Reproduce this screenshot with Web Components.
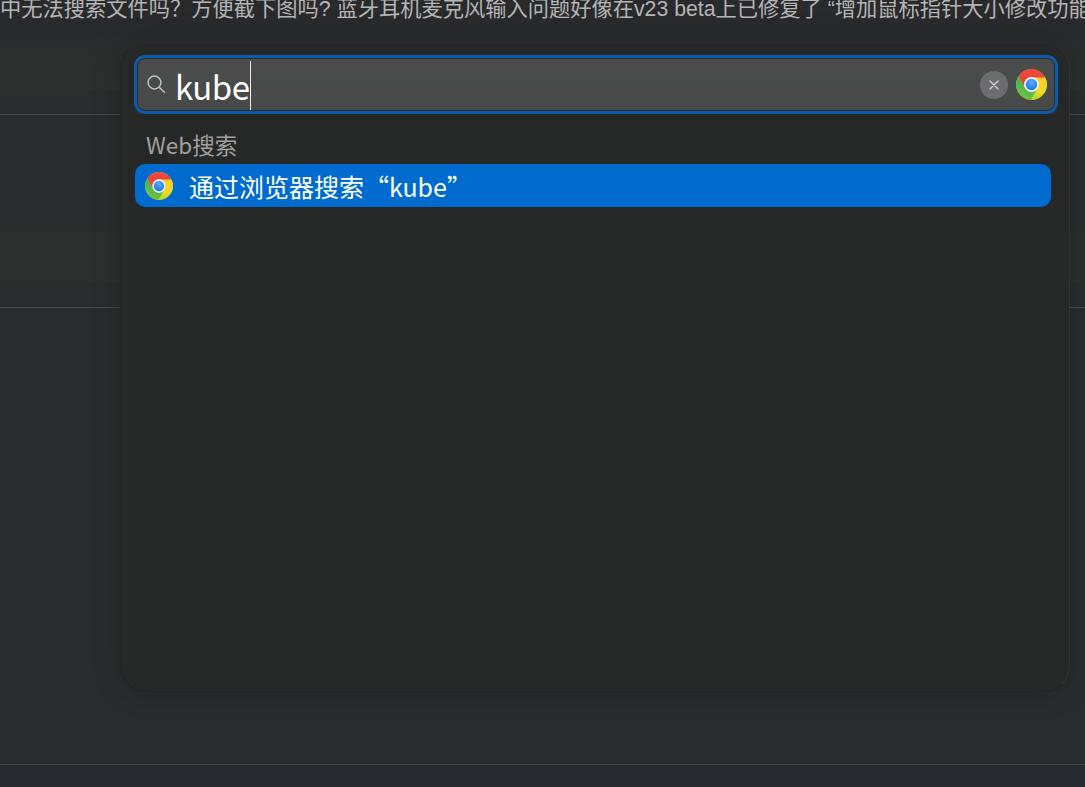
<!DOCTYPE html>
<html lang="zh-CN"><head><meta charset="utf-8"><title>kube</title>
<style>
html,body{margin:0;padding:0;height:100%;overflow:hidden;background:#292b2d}
</style></head><body>
<app-page></app-page>
<script>
class ChromeIcon extends HTMLElement{
  constructor(){super();const s=this.attachShadow({mode:'open'});
  const id=ChromeIcon.n=(ChromeIcon.n||0)+1;
  s.innerHTML=`<style>:host{display:block;width:var(--size,31px);height:var(--size,31px);flex:none}svg{display:block;width:100%;height:100%}</style>
  <svg viewBox="0 0 48 48" aria-hidden="true"><defs>
  <linearGradient id="r${id}" x1="0" y1="0" x2="0" y2="1"><stop offset="0" stop-color="#f0483c"/><stop offset="1" stop-color="#e23e33"/></linearGradient>
  <linearGradient id="y${id}" x1="0.5" y1="0" x2="0.35" y2="1"><stop offset="0" stop-color="#fbcb27"/><stop offset=".6" stop-color="#eedb22"/><stop offset="1" stop-color="#b5d432"/></linearGradient>
  <linearGradient id="g${id}" x1="0" y1="0" x2="1" y2="1"><stop offset="0" stop-color="#7cc540"/><stop offset="1" stop-color="#25ab5c"/></linearGradient>
  <radialGradient id="b${id}" cx=".5" cy=".3" r=".8"><stop offset="0" stop-color="#5aaefb"/><stop offset="1" stop-color="#0f74e4"/></radialGradient></defs>
  <circle cx="24" cy="24" r="23.8" fill="#cfd040"/>
  <path fill="url(#g${id})" transform="rotate(240 24 24)" d="M24 13L45.3 13A24 24 0 0 0 3.82 11.05L14.47 29.5A11 11 0 0 1 24 13Z"/>
  <path fill="url(#y${id})" d="M34.9 25.5A11 11 0 0 1 33.53 29.5L24 48A24 24 0 0 0 45.3 13L24 13A11 11 0 0 1 34.9 25.5Z"/>
  <path fill="url(#r${id})" d="M24 13L45.3 13A24 24 0 0 0 3.82 11.05L14.47 29.5A11 11 0 0 1 24 13Z"/>
  <circle cx="24" cy="24" r="11.6" fill="#eef0f2"/>
  <circle cx="24" cy="24" r="8.8" fill="url(#b${id})"/></svg>`;}
}
customElements.define('chrome-icon',ChromeIcon);

class BackdropBand extends HTMLElement{
  constructor(){super();this.attachShadow({mode:'open'}).innerHTML=`<style>:host{display:block;height:var(--h);background:var(--bg,transparent);border-bottom:var(--line,0 solid transparent);box-sizing:border-box}</style><slot></slot>`;}
}
customElements.define('backdrop-band',BackdropBand);

class SearchField extends HTMLElement{
  constructor(){super();this.attachShadow({mode:'open'}).innerHTML=`<style>
  :host{display:flex;align-items:center;box-sizing:border-box;height:59px;margin:0;border:3px solid #0e5aa9;border-radius:11px;background:linear-gradient(#4b4c4c,#474848);box-shadow:inset 0 0 0 1px #2b2c2c;padding:0 8px 0 9px;font-family:"Noto Sans CJK SC","Noto Sans",sans-serif}
  .mag{width:20px;height:22px;flex:none;margin-right:9px}
  .q{font-size:33px;line-height:51px;color:#fff;height:49px;display:block;letter-spacing:-.45px;border-right:1px solid #f0f0f0;white-space:pre;margin-top:1px}
  .sp{flex:1}
  .x{width:28px;height:28px;border-radius:50%;background:#6d6d6f;display:flex;align-items:center;justify-content:center;margin-right:8px;flex:none}
  .x svg{width:10px;height:10px;display:block}
  </style>
  <svg class="mag" viewBox="0 0 20 22" fill="none" stroke="#bcc0c6" stroke-width="1.5" stroke-linecap="round"><circle cx="8.5" cy="8.5" r="6.4"/><path d="M13.2 13.2L18.4 18.2"/></svg>
  <span class="q"><slot></slot></span><span class="sp"></span>
  <span class="x"><svg viewBox="0 0 10 10" stroke="#cfcfd2" stroke-width="1.4" stroke-linecap="round"><path d="M1 1L9 9M9 1L1 9"/></svg></span>
  <chrome-icon></chrome-icon>`;}
}
customElements.define('search-field',SearchField);

class ResultRow extends HTMLElement{
  constructor(){super();this.attachShadow({mode:'open'}).innerHTML=`<style>
  :host{display:flex;align-items:center;height:43px;box-sizing:border-box;margin:0 7px 0 1px;padding-left:10px;border-radius:10px;background:#006bce;color:#fff;font:25px/43px "Noto Sans CJK SC","Noto Sans",sans-serif;--size:28px;white-space:nowrap}
  .t{margin-left:16px;position:relative;top:1px}
  </style><chrome-icon></chrome-icon><span class="t"><slot></slot></span>`;}
}
customElements.define('result-row',ResultRow);

class LauncherPanel extends HTMLElement{
  constructor(){super();this.attachShadow({mode:'open'}).innerHTML=`<style>
  :host{position:absolute;left:120px;top:42px;width:950px;height:650px;box-sizing:border-box;display:block;padding:12px 11px 0 13px;background:#262827;border:1px solid #313232;border-top-color:#2c2d2e;border-left-color:#232524;border-bottom-color:#222423;border-radius:26px;box-shadow:0 0 30px rgba(0,0,0,.2)}
  </style><slot></slot>`;}
}
customElements.define('launcher-panel',LauncherPanel);

class SectionLabel extends HTMLElement{
  constructor(){super();this.attachShadow({mode:'open'}).innerHTML=`<style>:host{display:block;font:22.5px/30px "Noto Sans CJK SC","Noto Sans",sans-serif;color:#a0a0a0;margin:15px 0 5px 12px;height:30px}</style><slot></slot>`;}
}
customElements.define('section-label',SectionLabel);

class AppPage extends HTMLElement{
  constructor(){super();this.attachShadow({mode:'open'}).innerHTML=`<style>
  :host{display:flex;flex-direction:column;position:relative;width:1085px;height:787px;overflow:hidden;background:#292b2d}
  .top{height:38px;box-sizing:border-box;background:#292a2c;color:#b5b5b5;font:21.25px/19px "Liberation Sans","Noto Sans CJK SC",sans-serif;white-space:nowrap;overflow:hidden}
  .fill{flex:1}
  </style>
  <div class="top">中无法搜索文件吗？方便截下图吗? 蓝牙耳机麦克风输入问题好像在v23 beta上已修复了 “增加鼠标指针大小修改功能</div>
  <backdrop-band style="--h:52px;--bg:linear-gradient(#2a2c2d,#2e302f)"></backdrop-band>
  <backdrop-band style="--h:25px;--bg:#2a2c2e;--line:1px solid #444648"></backdrop-band>
  <backdrop-band style="--h:117px;--bg:#292b2d"></backdrop-band>
  <backdrop-band style="--h:50px;--bg:#2d2f2e"></backdrop-band>
  <backdrop-band style="--h:26px;--bg:#2a2c2e;--line:1px solid #444648"></backdrop-band>
  <backdrop-band style="--h:457px;--bg:#292b2d;--line:1px solid #444648"></backdrop-band>
  <div class="fill" style="background:#292a30"></div>
  <launcher-panel>
    <search-field>kube</search-field>
    <section-label>Web搜索</section-label>
    <result-row>通过浏览器搜索“kube”</result-row>
  </launcher-panel>`;}
}
customElements.define('app-page',AppPage);
</script></body></html>
